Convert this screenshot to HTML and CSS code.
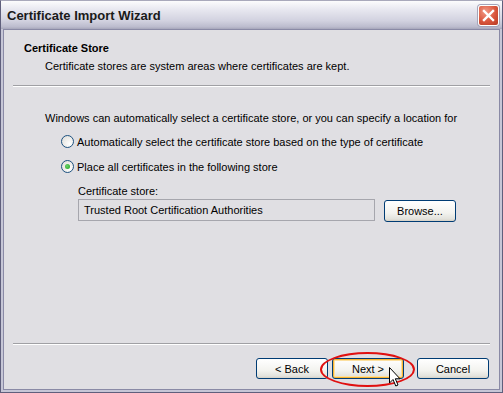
FILE: index.html
```html
<!DOCTYPE html>
<html lang="en">
<head>
    <meta charset="UTF-8">
    <title>Certificate Import Wizard</title>
    <link rel="stylesheet" href="styles.css">
</head>
<body>
    <div class="window">
        <div class="titlebar">
            <span class="title">Certificate Import Wizard</span>
            <button class="close" aria-label="Close">
                <svg width="13" height="13" viewBox="0 0 13 13">
                    <path d="M2 2 L11 11 M11 2 L2 11" stroke="#fff" stroke-width="2.4" stroke-linecap="square"/>
                </svg>
            </button>
        </div>

        <div class="client">
            <div class="header">
                <h1>Certificate Store</h1>
                <p>Certificate stores are system areas where certificates are kept.</p>
            </div>
            <div class="rule"></div>

            <div class="content">
                <p class="intro">Windows can automatically select a certificate store, or you can specify a location for</p>

                <label class="option">
                    <span class="radio"></span>
                    Automatically select the certificate store based on the type of certificate
                </label>
                <label class="option">
                    <span class="radio checked"></span>
                    Place all certificates in the following store
                </label>

                <div class="store">
                    <div class="store-label">Certificate store:</div>
                    <div class="store-row">
                        <div class="field">Trusted Root Certification Authorities</div>
                        <button class="btn browse">Browse...</button>
                    </div>
                </div>
            </div>

            <div class="rule"></div>
            <div class="footer">
                <button class="btn">&lt; Back</button>
                <button class="btn default">Next &gt;
                    <span class="ring"></span>
                    <svg class="cursor" width="13" height="21" viewBox="0 0 13 21">
                        <path d="M0.5 0.5 L0.5 16 L4 12.5 L6.8 19 L9 18 L6.3 11.8 L11 11.8 Z" fill="#fff" stroke="#000" stroke-width="1"/>
                    </svg>
                </button>
                <button class="btn cancel">Cancel</button>
            </div>
        </div>
    </div>
</body>
</html>
```

FILE: styles.css
```css
body {
    margin: 0;
    font-family: "Liberation Sans", Arial, sans-serif;
    font-size: 11px;
    color: #000;
}

.window {
    width: 503px;
    height: 393px;
    box-sizing: border-box;
    display: flex;
    flex-direction: column;
    border: 1px solid #5f5f7c;
    border-top-color: #a9a9bb;
    background: #c6c6d6;
    padding: 0 2px 2px;
}

.titlebar {
    height: 28px;
    display: flex;
    align-items: center;
    justify-content: space-between;
    padding: 0 3px 0 6px;
    margin: 0 -2px;
    background: linear-gradient(#fcfcfd, #e8e8f0 30%, #d2d2e0 70%, #bcbcce 92%, #a6a6ba);
}

.title {
    font-weight: bold;
    font-size: 13px;
    color: #1a1a1a;
    margin-top: 1px;
}

.close {
    width: 21px;
    height: 21px;
    padding: 0;
    border: 1px solid #fff;
    border-radius: 3px;
    background: radial-gradient(circle at 35% 30%, #f29a86, #d9553c 55%, #b63a23);
    display: flex;
    align-items: center;
    justify-content: center;
    box-shadow: 0 0 0 1px #a4a4b8;
}

.client {
    flex: 1;
    display: flex;
    flex-direction: column;
    background: #e0dfe3;
    border: 1px solid #8a8aa6;
}

.header {
    height: 55px;
    box-sizing: border-box;
    padding: 12px 0 0 20px;
}

.header h1 {
    margin: 0;
    font-size: 11px;
    font-weight: bold;
}

.header p {
    margin: 6px 0 0 21px;
}

.rule {
    margin: 0 9px;
    border-top: 1px solid #a0a0a4;
    border-bottom: 1px solid #fff;
    height: 0;
}

.content {
    flex: 1;
    padding: 25px 0 0 41px;
}

.intro {
    margin: 0 0 11px;
}

.option {
    display: flex;
    align-items: center;
    gap: 3px;
    margin: 0 0 12px 16px;
    height: 13px;
}

.radio {
    width: 11px;
    height: 11px;
    border: 1px solid #1c5180;
    border-radius: 50%;
    background: radial-gradient(circle at 70% 70%, #fff, #dcdad5);
    display: flex;
    align-items: center;
    justify-content: center;
}

.radio.checked::after {
    content: "";
    width: 5px;
    height: 5px;
    border-radius: 50%;
    background: radial-gradient(circle at 40% 40%, #6bd36b, #21a121);
}

.store {
    margin: 12px 0 0 33px;
}

.store-row {
    display: flex;
    align-items: flex-start;
    gap: 9px;
    margin-top: 2px;
}

.field {
    width: 297px;
    height: 22px;
    box-sizing: border-box;
    border: 1px solid #a6a6ad;
    padding: 4px 5px;
    background: #e0dfe3;
}

.btn {
    position: relative;
    width: 72px;
    height: 21px;
    padding: 0;
    font: inherit;
    border: 1px solid #003c74;
    border-radius: 3px;
    background: linear-gradient(#fff, #f3f3ef 60%, #e2e2dc 90%, #d6d0c5);
}

.browse {
    height: 22px;
    margin-top: 1px;
}

.footer {
    height: 44px;
    display: flex;
    justify-content: flex-end;
    align-items: flex-start;
    gap: 4px;
    padding: 13px 10px 0 0;
    box-sizing: border-box;
}

.cancel {
    margin-left: 9px;
}

.default {
    box-shadow: inset 0 0 0 1px #f8b330, inset 0 0 0 2px #fce0a0;
}

.ring {
    position: absolute;
    left: -13px;
    top: -7px;
    width: 91px;
    height: 31px;
    border: 2px solid #e01010;
    border-radius: 50%;
}

.cursor {
    position: absolute;
    left: 56px;
    top: 8px;
}
```
